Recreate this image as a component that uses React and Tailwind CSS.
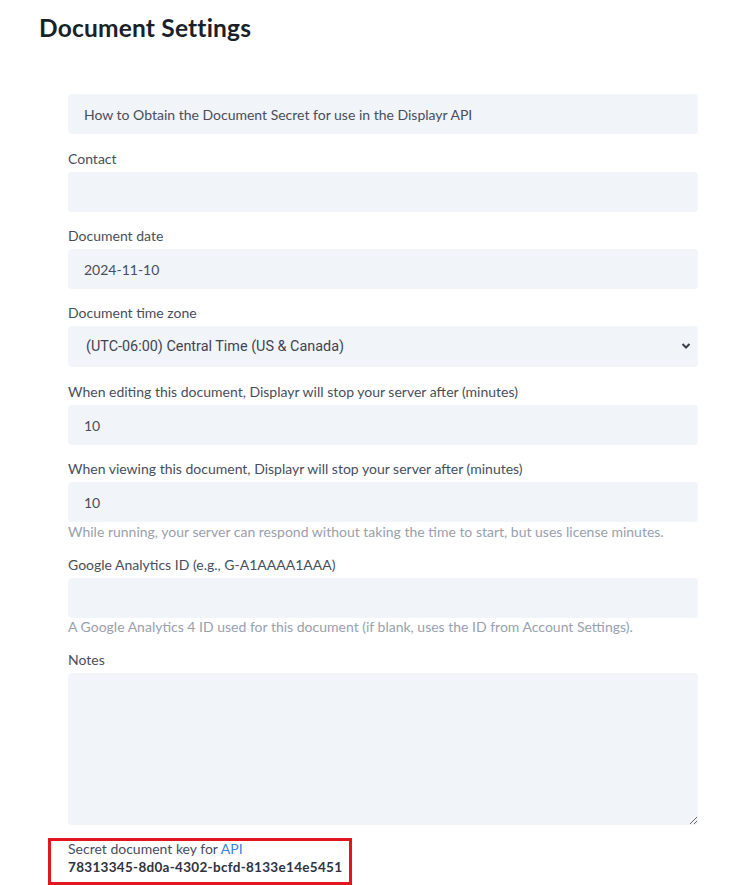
import React from 'react';

const inputCls =
  'block w-full h-10 rounded-[4px] bg-[#f1f4f9] px-4 text-[14px] text-[#474e5c] outline-none border-0';

const Field = ({ label, children, help, gap = 'mt-[14px]', helpCls = 'leading-[19px]' }) => (
  <div className={gap}>
    {label && <label className="block h-5 leading-5 text-[14px] text-[#474e5c] mb-[3px]">{label}</label>}
    {children}
    {help && <p className={`text-[14px] text-[#98a1ae] ${helpCls}`}>{help}</p>}
  </div>
);

const App = () => {
  return (
    <div className="min-h-screen bg-white font-['Lato',sans-serif] pb-2">
      <h1 className="pl-[39px] pt-[14px] text-[24.5px] leading-[28px] font-bold text-[#1b1f2a] tracking-[0.2px]">
        Document Settings
      </h1>
      <form className="ml-[68px] mt-[52px] w-[630px]">
        <Field gap="">
          <input className={inputCls} readOnly defaultValue="How to Obtain the Document Secret for use in the Displayr API" />
        </Field>
        <Field label="Contact" gap="mt-[15px]">
          <input className={inputCls} readOnly defaultValue="" />
        </Field>
        <Field label="Document date">
          <input className={inputCls} readOnly defaultValue="2024-11-10" />
        </Field>
        <Field label="Document time zone">
          <div className="relative">
            <select
              className="block w-full h-[41px] appearance-none rounded-[4px] bg-[#f1f4f9] pl-[18px] pr-8 text-[14.4px] text-[#3f4450] font-['Roboto',sans-serif] outline-none"
              defaultValue="cst"
            >
              <option value="cst">(UTC-06:00) Central Time (US &amp; Canada)</option>
            </select>
            <svg className="pointer-events-none absolute right-[7px] top-[16px]" width="10" height="8" viewBox="0 0 10 8">
              <path d="M1.5 2 L5 5.5 L8.5 2" fill="none" stroke="#3a3f4a" strokeWidth="2" />
            </svg>
          </div>
        </Field>
        <Field label="When editing this document, Displayr will stop your server after (minutes)" gap="mt-[15px]">
          <input className={inputCls} readOnly defaultValue="10" />
        </Field>
        <Field
          label="When viewing this document, Displayr will stop your server after (minutes)"
          help="While running, your server can respond without taking the time to start, but uses license minutes."
        >
          <input className={inputCls} readOnly defaultValue="10" />
        </Field>
        <Field
          label="Google Analytics ID (e.g., G-A1AAAA1AAA)"
          help="A Google Analytics 4 ID used for this document (if blank, uses the ID from Account Settings)."
          helpCls="leading-[18px]"
        >
          <input className={inputCls} readOnly defaultValue="" />
        </Field>
        <Field label="Notes">
          <textarea className="block w-full h-[152px] rounded-[4px] bg-[#f1f4f9] px-4 py-2 text-[14px] text-[#474e5c] outline-none" />
        </Field>
        <div className="mt-[13px] -ml-5 w-[304px] border-[3px] border-[#e3161d] pl-[17px] pt-0 pb-[7px]">
          <div className="text-[14px] leading-4 text-[#474e5c]">
            Secret document key for <a className="text-[#3b7fe0]">API</a>
          </div>
          <div className="mt-[2px] whitespace-nowrap text-[13.5px] leading-4 font-bold text-[#2e333d] tracking-[0.3px]">
            78313345-8d0a-4302-bcfd-8133e14e5451
          </div>
        </div>
      </form>
    </div>
  );
};

export default App;
